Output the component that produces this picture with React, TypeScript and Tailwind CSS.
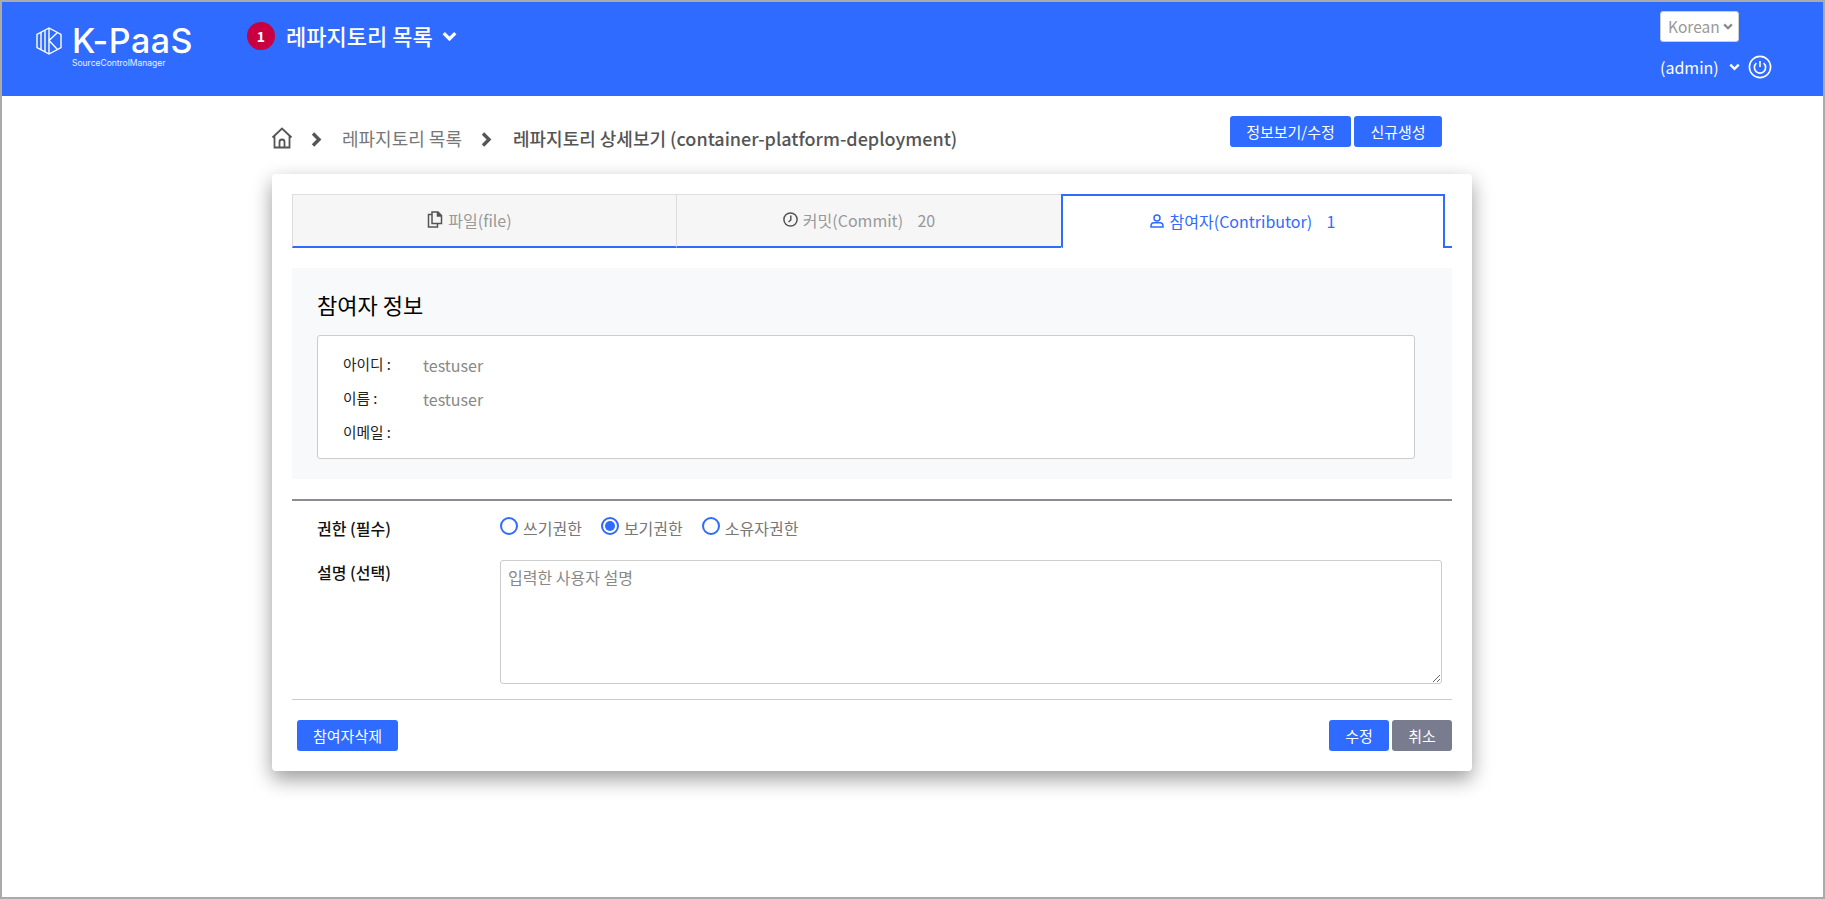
const font = "font-['Noto_Sans_CJK_KR','Noto_Sans',sans-serif]";

function Chevron({ className = "", size = 14 }: { className?: string; size?: number }) {
  return (
    <svg className={className} width={size} height={size * 0.7} viewBox="0 0 14 10" fill="none" stroke="currentColor" strokeWidth="3.2">
      <path d="M1.5 2 L7 7.5 L12.5 2" />
    </svg>
  );
}

function ChevronNext({ className = "" }: { className?: string }) {
  return (
    <svg className={className} width="11" height="15" viewBox="0 0 11 15" fill="none" stroke="#555" strokeWidth="3.4">
      <path d="M2 1.5 L8 7.5 L2 13.5" />
    </svg>
  );
}

function LogoMark() {
  return (
    <svg width="26" height="28" viewBox="0 0 26 28" fill="none" stroke="white" strokeWidth="1.4">
      <path d="M13 1 L25 7.5 V20.5 L13 27 L1 20.5 V7.5 Z" />
      <path d="M5 5.5 V22.5 M9 3.3 V24.7 M13 1 V27" />
      <path d="M13 13.5 L21 6 M13 13.5 L21 22" />
    </svg>
  );
}

function Logo() {
  return (
    <div className="flex items-start gap-[10px] ml-[34px] mt-[25px]">
      <LogoMark />
      <div className="flex flex-col">
        <span className="font-['Inter',sans-serif] text-[34px] leading-[28px] font-medium text-white tracking-[0.5px]">
          K-PaaS
        </span>
        <span className="font-['Inter',sans-serif] text-[8.5px] leading-[10px] mt-[3px] text-white/90">
          SourceControlManager
        </span>
      </div>
    </div>
  );
}

function Header() {
  return (
    <header className="h-[94px] bg-[#2f6bff] flex items-start shrink-0">
      <div className="w-[245px]">
        <Logo />
      </div>
      <div className="flex items-center mt-[20px]">
        <span className="w-7 h-7 rounded-full bg-[#c8003f] text-white text-sm font-bold flex items-center justify-center">
          1
        </span>
        <span className="ml-[11px] -mt-[2px] text-[22px] leading-7 font-medium text-white">레파지토리 목록</span>
        <Chevron className="ml-[9px] text-white" size={15} />
      </div>
      <div className="ml-auto mr-[50px] flex flex-col items-start mt-[9px] w-[113px]">
        <div className="w-[79px] h-[31px] bg-white rounded-[3px] border border-[#ccc] flex items-center pl-[7px] gap-[3px]">
          <span className="text-[15.5px] text-[#999]">Korean</span>
          <Chevron className="text-[#888]" size={10} />
        </div>
        <div className="flex items-center mt-[13px]">
          <span className="text-[16px] leading-6 text-white">(admin)</span>
          <Chevron className="ml-[10px] text-white" size={11} />
          <svg className="ml-[8px]" width="24" height="24" viewBox="0 0 24 24" fill="none" stroke="white" strokeWidth="1.6">
            <circle cx="12" cy="12" r="10.6" />
            <path d="M8.4 8.2 A5.6 5.6 0 1 0 15.6 8.2 M12 6 V12" />
          </svg>
        </div>
      </div>
    </header>
  );
}

function Breadcrumb() {
  return (
    <div className="flex items-start justify-between w-[1171px] ml-[269px] pt-[20px] h-[78px]">
      <div className="flex items-center mt-[9px] text-[18px] leading-[26px]">
        <svg width="22" height="22" viewBox="0 0 22 22" fill="none" stroke="#555" strokeWidth="1.8" className="mt-0">
          <path d="M1.5 10.5 L11 1.5 L20.5 10.5 M3.5 8.5 V20.5 H18.5 V8.5 M8.5 20.5 V15 A2.5 2.5 0 0 1 13.5 15 V20.5" />
        </svg>
        <ChevronNext className="ml-[18px] mt-[2px]" />
        <span className="ml-[20px] text-[#777]">레파지토리 목록</span>
        <ChevronNext className="ml-[19px] mt-[2px]" />
        <span className="ml-[21px] font-medium text-[#555]">레파지토리 상세보기 (container-platform-deployment)</span>
      </div>
      <div className="flex gap-[3px]">
        <Button className="w-[121px]">정보보기/수정</Button>
        <Button className="w-[88px]">신규생성</Button>
      </div>
    </div>
  );
}

function Button({ children, className = "" }: { children: string; className?: string }) {
  return (
    <button className={`h-[31px] rounded-[3px] bg-[#2f6bff] text-white text-[15px] leading-none ${className}`}>
      {children}
    </button>
  );
}

function FileIcon() {
  return (
    <svg width="16" height="17" viewBox="0 0 16 17" fill="none" stroke="#555" strokeWidth="1.5">
      <path d="M5 3.5 H1.5 V16 H10.5 V12.5" />
      <path d="M5 1 H11 L14.5 4.5 V12.5 H5 Z" />
      <path d="M10.5 1 V5 H14.5" fill="#555" />
    </svg>
  );
}

function ClockIcon() {
  return (
    <svg width="15" height="15" viewBox="0 0 15 15" fill="none" stroke="#555" strokeWidth="1.5">
      <circle cx="7.5" cy="7.5" r="6.6" />
      <path d="M7.8 3.5 V8 L5.5 10" />
    </svg>
  );
}

function UserIcon() {
  return (
    <svg width="14" height="14" viewBox="0 0 14 14" fill="none" stroke="#2f6bff" strokeWidth="1.5">
      <circle cx="7" cy="4" r="3" />
      <path d="M1 13 V11.5 A3 3 0 0 1 4 8.8 H10 A3 3 0 0 1 13 11.5 V13 Z" />
    </svg>
  );
}

function Tabs() {
  return (
    <div className="flex h-[54px]">
      <div className="w-[384px] pr-[30px] pb-[2px] bg-[#f6f6f6] border-t border-l border-[#ddd] border-b-2 border-b-[#2f6bff] flex items-center justify-center gap-[5px] text-[16px] text-[#999]">
        <FileIcon />
        <span>파일(file)</span>
      </div>
      <div className="w-[385px] pr-[20px] pb-[2px] bg-[#f6f6f6] border-t border-l border-[#ddd] border-b-2 border-b-[#2f6bff] flex items-center justify-center gap-[5px] text-[16px] text-[#999]">
        <ClockIcon />
        <span className="whitespace-pre">커밋(Commit)    20</span>
      </div>
      <div className="w-[384px] pr-[21px] pb-[2px] border-2 border-b-0 border-[#2f6bff] rounded-bl-[2px] flex items-center justify-center gap-[6px] text-[16px] text-[#2f6bff]">
        <UserIcon />
        <span className="whitespace-pre">참여자(Contributor)    1</span>
      </div>
      <div className="w-[7px] border-b-2 border-[#2f6bff]" />
    </div>
  );
}

function InfoRow({ label, value }: { label: string; value?: string }) {
  return (
    <div className="flex items-center h-[34px]">
      <span className="w-[80px] text-[14.7px] text-[#222] -mt-[2px]">{label}</span>
      {value && <span className="text-[16px] text-[#888]">{value}</span>}
    </div>
  );
}

function Radio({ label, checked }: { label: string; checked?: boolean }) {
  return (
    <label className="flex items-center">
      <span className="w-[18px] h-[18px] rounded-full border-2 border-[#2f6bff] flex items-center justify-center -mt-[5px]">
        {checked && <span className="w-[10px] h-[10px] rounded-full bg-[#2f6bff]" />}
      </span>
      <span className="ml-[5px] text-[16px] text-[#777]">{label}</span>
    </label>
  );
}

export default function App() {
  return (
    <div className={`h-[899px] border-2 border-[#aaa] bg-white flex flex-col overflow-hidden ${font}`}>
      <Header />
      <Breadcrumb />
      <main className="w-[1200px] h-[597px] ml-[270px] bg-white rounded-[4px] shadow-[0_8px_20px_rgba(0,0,0,0.4)] px-5 pt-5">
        <Tabs />
        <section className="mt-5 h-[211px] bg-[#f8f9fa] rounded-[2px] px-[25px] pt-[19px]">
          <h2 className="text-[22px] leading-[34px] font-normal text-black">참여자 정보</h2>
          <div className="mt-[14px] w-[1098px] h-[124px] bg-white border border-[#ccc] rounded-[3px] pl-[25px] pt-[12px]">
            <InfoRow label="아이디 :" value="testuser" />
            <InfoRow label="이름 :" value="testuser" />
            <InfoRow label="이메일 :" />
          </div>
        </section>
        <div className="mt-5 border-t-2 border-[#8c8c96]" />
        <div className="flex mt-[15px] pl-[25px] h-[24px] items-center">
          <span className="w-[183px] text-[16px] font-medium text-[#111]">권한 (필수)</span>
          <div className="flex gap-[19px]">
            <Radio label="쓰기권한" />
            <Radio label="보기권한" checked />
            <Radio label="소유자권한" />
          </div>
        </div>
        <div className="flex mt-5 pl-[25px]">
          <span className="w-[183px] text-[16px] leading-6 font-medium text-[#111]">설명 (선택)</span>
          <textarea
            className="w-[942px] h-[124px] border border-[#ccc] rounded-[3px] px-[7px] py-1 text-[16px] leading-6 placeholder:text-[#888] outline-none"
            placeholder="입력한 사용자 설명"
            readOnly
          />
        </div>
        <div className="mt-[15px] border-t border-[#ccc]" />
        <div className="flex justify-between mt-5 pl-[5px]">
          <Button className="w-[101px]">참여자삭제</Button>
          <div className="flex gap-[3px]">
            <Button className="w-[60px]">수정</Button>
            <Button className="w-[60px] !bg-[#787c8e]">취소</Button>
          </div>
        </div>
      </main>
    </div>
  );
}
